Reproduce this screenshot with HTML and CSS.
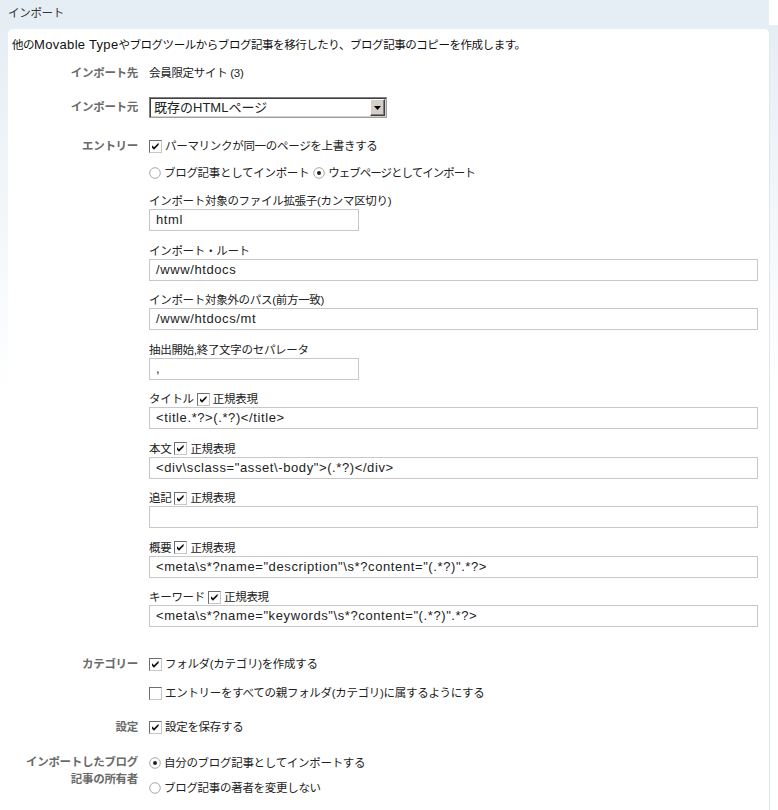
FILE: index.html
```html
<!DOCTYPE html>
<html lang="ja">
<head>
<meta charset="utf-8">
<title>インポート</title>
<link rel="stylesheet" href="styles.css">
</head>
<body>
<div class="page">
  <div class="corner"></div>
  <h1 class="title">インポート</h1>
  <div class="panel">
    <p class="desc">他の<span class="lat">Movable Type</span>やブログツールからブログ記事を移行したり、ブログ記事のコピーを作成します。</p>

    <div class="row r-dest">
      <div class="lbl">インポート先</div>
      <div class="val">会員限定サイト (3)</div>
    </div>

    <div class="row r-src">
      <div class="lbl">インポート元</div>
      <div class="val">
        <div class="select">
          <span class="sel-text">既存のHTMLページ</span>
          <span class="sel-btn"><svg width="7" height="4" viewBox="0 0 7 4"><path d="M0 0h7L3.5 4z" fill="#000"/></svg></span>
        </div>
      </div>
    </div>

    <div class="row r-entry">
      <div class="lbl">エントリー</div>
      <div class="val">
        <div class="line"><span class="cb on"><svg width="11" height="11" viewBox="0 0 11 11"><path d="M2 4.3l2 2 4.6-4.6v2.4L4 8.7 2 6.7z" fill="#111"/></svg></span>パーマリンクが同一のページを上書きする</div>
        <div class="line radios"><span class="rd"><svg width="12" height="12" viewBox="0 0 12 12"><circle cx="6" cy="6" r="5.3" fill="#fff" stroke="#a8a8a8"/></svg></span>ブログ記事としてインポート<span class="rd rd2"><svg width="12" height="12" viewBox="0 0 12 12"><circle cx="6" cy="6" r="5.3" fill="#fff" stroke="#a8a8a8"/><circle cx="6" cy="6" r="2" fill="#222"/></svg></span><span class="narrow">ウェブページとしてインポート</span></div>

        <div class="field first">
          <div class="flabel">インポート対象のファイル拡張子(カンマ区切り)</div>
          <div class="input short">html</div>
        </div>
        <div class="field">
          <div class="flabel">インポート・ルート</div>
          <div class="input">/www/htdocs</div>
        </div>
        <div class="field">
          <div class="flabel">インポート対象外のパス(前方一致)</div>
          <div class="input">/www/htdocs/mt</div>
        </div>
        <div class="field">
          <div class="flabel">抽出開始,終了文字のセパレータ</div>
          <div class="input short">,</div>
        </div>
        <div class="field">
          <div class="flabel">タイトル<span class="cb on"><svg width="11" height="11" viewBox="0 0 11 11"><path d="M2 4.3l2 2 4.6-4.6v2.4L4 8.7 2 6.7z" fill="#111"/></svg></span>正規表現</div>
          <div class="input">&lt;title.*?&gt;(.*?)&lt;/title&gt;</div>
        </div>
        <div class="field">
          <div class="flabel">本文<span class="cb on"><svg width="11" height="11" viewBox="0 0 11 11"><path d="M2 4.3l2 2 4.6-4.6v2.4L4 8.7 2 6.7z" fill="#111"/></svg></span>正規表現</div>
          <div class="input">&lt;div\sclass="asset\-body"&gt;(.*?)&lt;/div&gt;</div>
        </div>
        <div class="field">
          <div class="flabel">追記<span class="cb on"><svg width="11" height="11" viewBox="0 0 11 11"><path d="M2 4.3l2 2 4.6-4.6v2.4L4 8.7 2 6.7z" fill="#111"/></svg></span>正規表現</div>
          <div class="input"></div>
        </div>
        <div class="field">
          <div class="flabel">概要<span class="cb on"><svg width="11" height="11" viewBox="0 0 11 11"><path d="M2 4.3l2 2 4.6-4.6v2.4L4 8.7 2 6.7z" fill="#111"/></svg></span>正規表現</div>
          <div class="input">&lt;meta\s*?name="description"\s*?content="(.*?)".*?&gt;</div>
        </div>
        <div class="field">
          <div class="flabel">キーワード<span class="cb on"><svg width="11" height="11" viewBox="0 0 11 11"><path d="M2 4.3l2 2 4.6-4.6v2.4L4 8.7 2 6.7z" fill="#111"/></svg></span>正規表現</div>
          <div class="input">&lt;meta\s*?name="keywords"\s*?content="(.*?)".*?&gt;</div>
        </div>
      </div>
    </div>

    <div class="row r-cat">
      <div class="lbl">カテゴリー</div>
      <div class="val">
        <div class="line"><span class="cb on"><svg width="11" height="11" viewBox="0 0 11 11"><path d="M2 4.3l2 2 4.6-4.6v2.4L4 8.7 2 6.7z" fill="#111"/></svg></span>フォルダ(カテゴリ)を作成する</div>
        <div class="line second"><span class="cb"></span>エントリーをすべての親フォルダ(カテゴリ)に属するようにする</div>
      </div>
    </div>

    <div class="row r-set">
      <div class="lbl">設定</div>
      <div class="val">
        <div class="line"><span class="cb on"><svg width="11" height="11" viewBox="0 0 11 11"><path d="M2 4.3l2 2 4.6-4.6v2.4L4 8.7 2 6.7z" fill="#111"/></svg></span>設定を保存する</div>
      </div>
    </div>

    <div class="row r-owner">
      <div class="lbl two">インポートしたブログ<br>記事の所有者</div>
      <div class="val">
        <div class="line tall"><span class="rd"><svg width="12" height="12" viewBox="0 0 12 12"><circle cx="6" cy="6" r="5.3" fill="#fff" stroke="#a8a8a8"/><circle cx="6" cy="6" r="2" fill="#222"/></svg></span>自分のブログ記事としてインポートする</div>
        <div class="line tall second2"><span class="rd"><svg width="12" height="12" viewBox="0 0 12 12"><circle cx="6" cy="6" r="5.3" fill="#fff" stroke="#a8a8a8"/></svg></span>ブログ記事の著者を変更しない</div>
      </div>
    </div>
  </div>
</div>
</body>
</html>
```

FILE: styles.css
```css
* { box-sizing: border-box; }
html, body {
  margin: 0;
  padding: 0;
  background: #fff;
}
body {
  font-family: "Liberation Sans", "Noto Sans CJK JP", sans-serif;
  font-size: 11.5px;
  letter-spacing: -0.3px;
  color: #222;
}
.page {
  position: relative;
  width: 778px;
  height: 810px;
  overflow: hidden;
  background: linear-gradient(to bottom, #e6eef5 0px, #e6eef5 30px, #f3f7fa 220px, #ffffff 395px);
}
.corner {
  position: absolute;
  top: 0;
  right: 0;
  width: 9px;
  height: 25px;
  background: #fff;
}
.title {
  margin: 0;
  height: 29px;
  padding-left: 8px;
  line-height: 26px;
  font-size: 11.5px;
  font-weight: normal;
  color: #333;
}
.panel {
  margin-left: 8px;
  width: 762px;
  height: 781px;
  background: #fff;
  border-radius: 5px 5px 0 0;
  border-right: 1px solid #dfe8ef;
  padding: 9px 11px 0 4px;
}
.desc {
  margin: 0;
  line-height: 14px;
  height: 14px;
  color: #111;
  white-space: nowrap;
  letter-spacing: -0.45px;
}
.lat {
  font-size: 13px;
  letter-spacing: 0.3px;
}
.narrow { letter-spacing: -1px; }
.row {
  display: grid;
  grid-template-columns: 126px 1fr;
  column-gap: 11px;
}
.lbl {
  text-align: right;
  font-weight: bold;
  color: #6a6a6a;
  line-height: 14px;
  white-space: nowrap;
}
.val {
  line-height: 14px;
  color: #222;
}
.r-dest { margin-top: 14px; }
.r-src { margin-top: 17px; }
.r-src .lbl { line-height: 21px; }
.r-entry { margin-top: 21px; }
.r-cat { margin-top: 30px; }
.r-set { margin-top: 20px; }
.r-owner { margin-top: 20px; }

.select {
  display: flex;
  align-items: stretch;
  width: 238px;
  height: 21px;
  border: 1px solid #808080;
  border-right-color: #a0a0a0;
  border-bottom-color: #a0a0a0;
  box-shadow: inset 1px 1px 0 #404040, inset -1px -1px 0 #d4d0c8;
  background: #fff;
  padding: 1px;
}
.sel-text {
  flex: 1;
  font-size: 13px;
  letter-spacing: 0;
  line-height: 17px;
  padding-left: 3px;
  color: #222;
}
.sel-btn {
  width: 15px;
  background: #d4d0c8;
  border: 1px solid;
  border-color: #fff #404040 #404040 #fff;
  box-shadow: inset -1px -1px 0 #808080;
  display: flex;
  align-items: center;
  justify-content: center;
}

.line {
  display: flex;
  align-items: center;
  height: 14px;
  white-space: nowrap;
}
.line.radios { margin-top: 13px; }
.line.second { margin-top: 15px; }
.line.tall { height: 17px; }
.line.second2 { margin-top: 8px; }
.lbl.two { line-height: 17px; }

.cb {
  display: inline-flex;
  align-items: center;
  justify-content: center;
  width: 13px;
  height: 13px;
  border: 1px solid;
  border-color: #6f6f6f #c6c6c6 #c6c6c6 #6f6f6f;
  background: #fff;
  margin-right: 3px;
  flex: none;
}
.cb svg { display: block; }
.flabel .cb { margin-left: 3px; }
.rd {
  display: inline-flex;
  width: 12px;
  height: 12px;
  margin-right: 3px;
  flex: none;
}
.rd2 { margin-left: 4px; }

.field { margin-top: 12.5px; }
.field.first { margin-top: 14px; }
.flabel {
  height: 14px;
  line-height: 14px;
  margin-bottom: 1px;
  white-space: nowrap;
  display: flex;
  align-items: center;
}
.input {
  height: 22px;
  border: 1px solid #c8c8c8;
  padding-left: 6px;
  line-height: 20px;
  font-size: 13px;
  letter-spacing: 0.6px;
  color: #222;
  white-space: nowrap;
  overflow: hidden;
}
.input.short { width: 210px; }
```
